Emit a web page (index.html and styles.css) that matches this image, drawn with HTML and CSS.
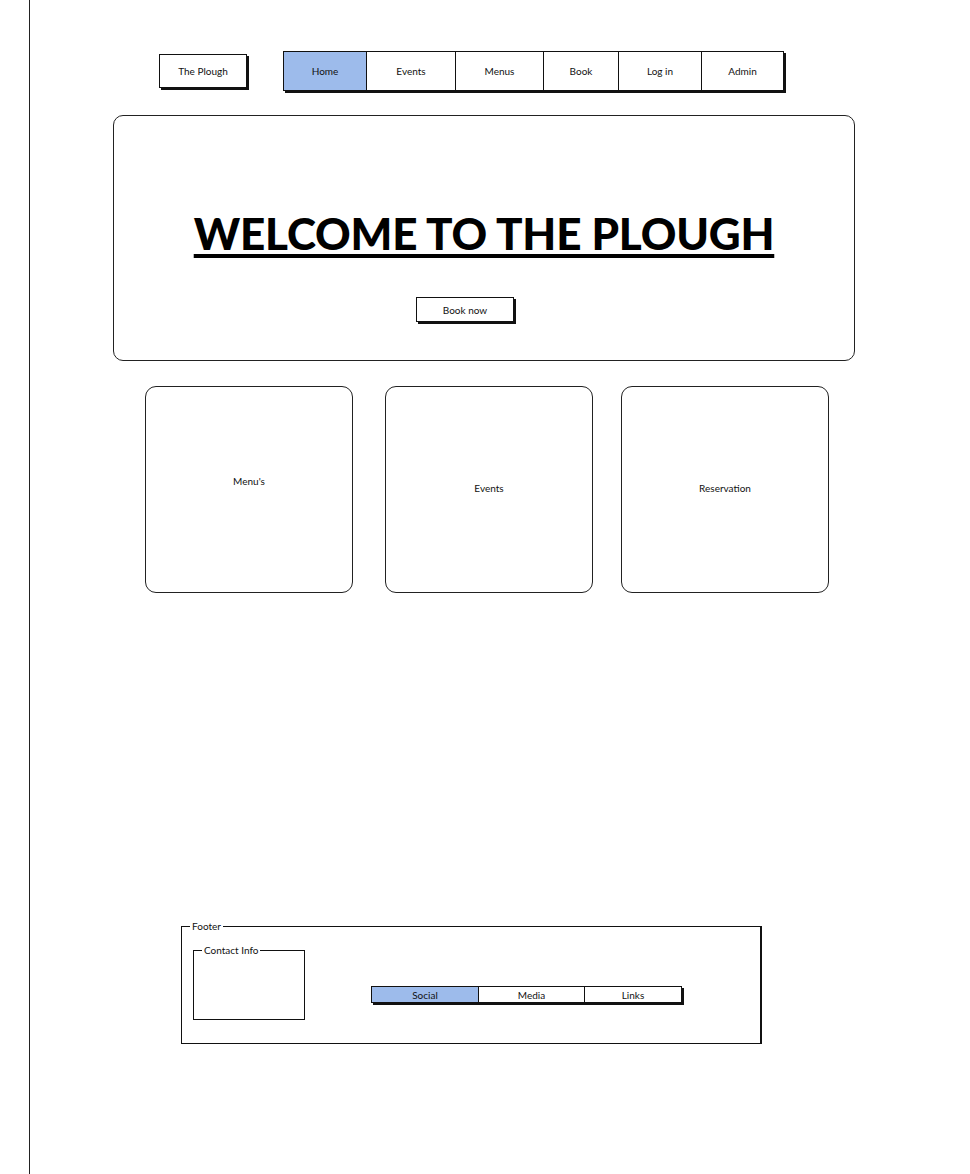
FILE: index.html
```html
<!DOCTYPE html>
<html lang="en">
<head>
<meta charset="utf-8">
<title>The Plough</title>
<link rel="stylesheet" href="styles.css">
</head>
<body>
<div class="page">
  <header class="header">
    <div class="brand">The Plough</div>
    <nav class="nav">
      <a class="nav-item active w-home">Home</a>
      <a class="nav-item w-events">Events</a>
      <a class="nav-item w-menus">Menus</a>
      <a class="nav-item w-book">Book</a>
      <a class="nav-item w-login">Log in</a>
      <a class="nav-item w-admin">Admin</a>
    </nav>
  </header>

  <section class="hero">
    <h1 class="hero-title">WELCOME TO THE PLOUGH</h1>
    <button class="btn">Book now</button>
  </section>

  <section class="cards">
    <div class="card card-first"><span class="card-label card-label-up">Menu's</span></div>
    <div class="card"><span class="card-label">Events</span></div>
    <div class="card"><span class="card-label">Reservation</span></div>
  </section>

  <fieldset class="footer">
    <legend class="legend legend-footer">Footer</legend>
    <div class="footer-row">
      <fieldset class="contact">
        <legend class="legend legend-contact">Contact Info</legend>
      </fieldset>
      <div class="tabs">
        <a class="tab active t-social">Social</a>
        <a class="tab t-media">Media</a>
        <a class="tab t-links">Links</a>
      </div>
    </div>
  </fieldset>
</div>
</body>
</html>
```

FILE: styles.css
```css
* { box-sizing: border-box; }

html, body {
  margin: 0;
  padding: 0;
  background: #fff;
}

body {
  font-family: Lato, "Liberation Sans", sans-serif;
  color: #111;
  font-size: 10px;
}

.page {
  margin-left: 29px;
  border-left: 1px solid #222;
  min-height: 1174px;
  padding-top: 51px;
}

/* header */
.header {
  display: flex;
  align-items: center;
  padding-left: 129px;
}

.brand {
  width: 88px;
  height: 34px;
  border: 1px solid #111;
  box-shadow: 2px 2px 0 #111;
  display: flex;
  align-items: center;
  justify-content: center;
  font-size: 10px;
}

.nav {
  margin-left: 36px;
  display: flex;
  height: 40px;
  border: 1px solid #111;
  box-shadow: 2px 2px 0 #111;
}

.nav-item {
  display: flex;
  align-items: center;
  justify-content: center;
  border-left: 1px solid #111;
  font-size: 10px;
  color: #111;
  text-decoration: none;
}
.nav-item:first-child { border-left: 0; }
.nav-item.active { background: #9dbbeb; }

.w-home { width: 82px; }
.w-events { width: 89px; }
.w-menus { width: 88px; }
.w-book { width: 75px; }
.w-login { width: 83px; }
.w-admin { width: 82px; }

/* hero */
.hero {
  margin: 24px 0 0 83px;
  width: 742px;
  height: 246px;
  border: 1px solid #222;
  border-radius: 10px;
  padding-top: 95px;
  display: flex;
  flex-direction: column;
  align-items: center;
}

.hero-title {
  margin: 0;
  font-family: Lato, "Liberation Sans", sans-serif;
  font-weight: 900;
  font-size: 44px;
  line-height: 44px;
  letter-spacing: -0.2px;
  color: #000;
  text-decoration: underline;
  text-decoration-thickness: 4px;
  text-underline-offset: 4px;
}

.btn {
  align-self: flex-start;
  margin: 42px 0 0 302px;
  width: 98px;
  height: 25px;
  border: 1px solid #111;
  box-shadow: 2px 2px 0 #111;
  background: #fff;
  font-family: Lato, "Liberation Sans", sans-serif;
  font-size: 10px;
  color: #111;
  padding: 0;
}

/* cards */
.cards {
  display: flex;
  margin: 25px 0 0 115px;
  gap: 28px;
}

.card {
  width: 208px;
  height: 207px;
  border: 1px solid #222;
  border-radius: 11px;
  display: flex;
  align-items: center;
  justify-content: center;
}
.card-first { width: 208px; margin-right: 4px; }

.card-label { font-size: 10px; margin-bottom: 3px; }
.card-label-up { margin-bottom: 17px; }

/* footer */
.footer {
  margin: 327px 0 0 151px;
  width: 581px;
  border: 1px solid #111;
  border-right-width: 2px;
  padding: 12px 0 23px 11px;
  min-inline-size: 0;
}

.legend {
  font-size: 10px;
  line-height: 12px;
  padding: 0 2px;
}
.legend-footer { margin-left: -3px; }

.footer-row {
  display: flex;
  align-items: flex-start;
}

.contact {
  margin: 0;
  width: 112px;
  border: 1px solid #111;
  padding: 0 0 63px 8px;
  min-inline-size: 0;
}

.tabs {
  margin: 42px 0 0 66px;
  display: flex;
  height: 17px;
  border: 1px solid #111;
  box-shadow: 2px 2px 0 #111;
}

.tab {
  display: flex;
  align-items: center;
  justify-content: center;
  border-left: 1px solid #111;
  font-size: 10px;
  color: #111;
  text-decoration: none;
}
.tab:first-child { border-left: 0; }
.tab.active { background: #9dbbeb; }

.t-social { width: 106px; }
.t-media { width: 106px; }
.t-links { width: 97px; }
```
